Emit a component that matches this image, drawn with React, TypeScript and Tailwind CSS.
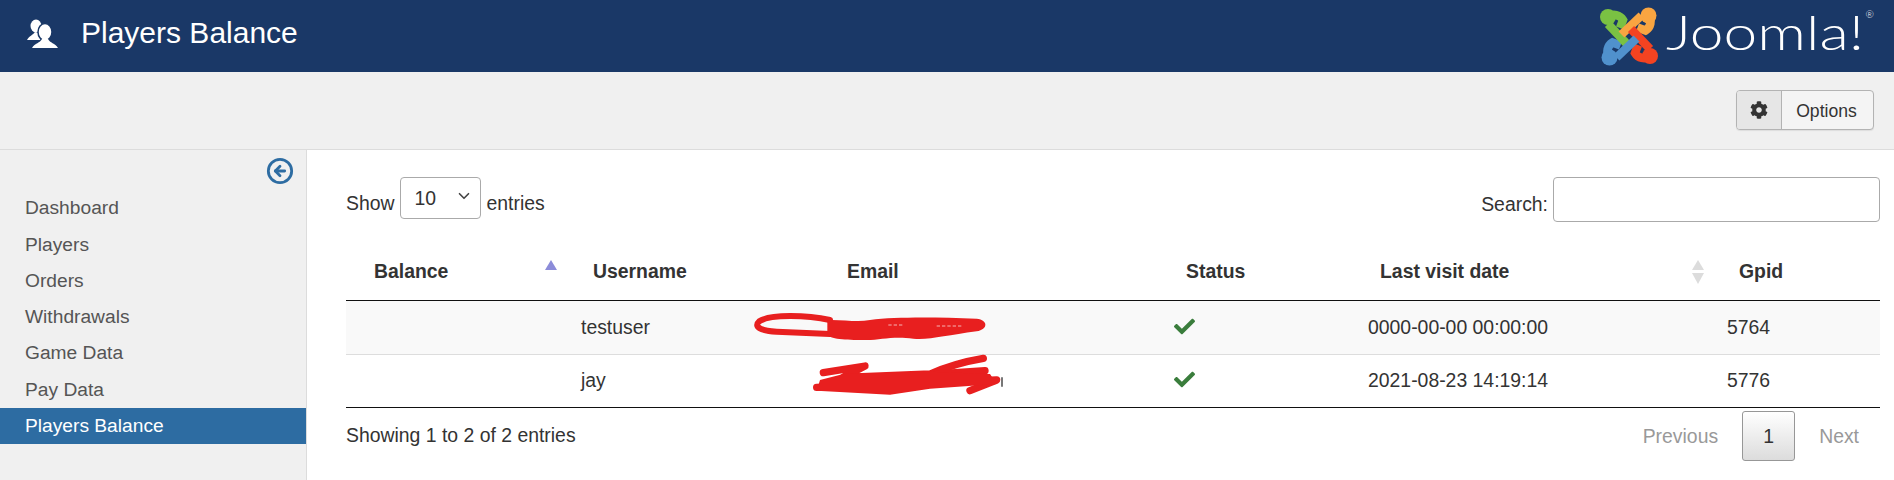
import { ChevronDown, CircleArrowLeft } from "lucide-react";
import { FaCheck, FaCog } from "react-icons/fa";

const navItems = ["Dashboard", "Players", "Orders", "Withdrawals", "Game Data", "Pay Data", "Players Balance"];

const rows = [
  { username: "testuser", visited: "0000-00-00 00:00:00", gpid: "5764", striped: true },
  { username: "jay", visited: "2021-08-23 14:19:14", gpid: "5776", striped: false },
];

function UsersIcon() {
  return (
    <svg viewBox="0 0 50 45" className="mt-[-4px] h-[45px] w-[50px]">
      <ellipse cx="16" cy="14" rx="5.5" ry="6.5" fill="#fff" />
      <path d="M7 28C9 24 13 23 15 20L22 22 20 28Z" fill="#fff" />
      <ellipse cx="25" cy="20" rx="7" ry="8.5" fill="#fff" stroke="#1a3867" strokeWidth="1.5" />
      <path d="M12 36C15 31 20 31 22 27H28C30 31 35 31 38 36Z" fill="#fff" />
    </svg>
  );
}

function JoomlaMark() {
  const colors = [
    { color: "#7ac143", angle: 0 },
    { color: "#f9a541", angle: 90 },
    { color: "#f44321", angle: 180 },
    { color: "#5091cd", angle: 270 },
  ];
  return (
    <svg viewBox="0 0 68 64" className="h-[64px] w-[68px]">
      {/* short arms go under the long bands of the next piece */}
      {colors.map(({ color, angle }) => (
        <g key={color} transform={`rotate(${angle} 34 32.5)`} fill="none" stroke={color} strokeWidth="8.5">
          <path d="M13 13C18 9 25 11 28 16L25 24" />
        </g>
      ))}
      {colors.map(({ color, angle }) => (
        <g key={color} transform={`rotate(${angle} 34 32.5)`} fill="none" stroke={color} strokeWidth="8.5">
          <circle cx="13" cy="13" r="8" fill={color} stroke="none" />
          <path d="M13 20L32 40" />
        </g>
      ))}
    </svg>
  );
}

function SortAsc() {
  return (
    <svg viewBox="0 0 12 10" className="absolute left-[199px] top-[17px] h-[10px] w-[12px]">
      <path d="M6 0L12 10H0Z" fill="#8c8cd9" />
    </svg>
  );
}

function SortBoth() {
  return (
    <svg viewBox="0 0 12 24" className="absolute left-[336px] top-[17px] h-[24px] w-[12px]">
      <path d="M6 0L12 10H0Z" fill="#dcdcdc" />
      <path d="M0 13H12L6 24Z" fill="#dcdcdc" />
    </svg>
  );
}

// red marker scribbles over the email column
function Scribbles() {
  return (
    <svg viewBox="0 0 870 330" className="pointer-events-none absolute left-[384px] top-[57px] h-[110px] w-[290px]">
      <g fill="none" stroke="#e81f1f" strokeLinecap="round" strokeLinejoin="round">
        <path d="M300 60C230 45 120 42 88 64C70 80 90 92 140 95L300 102" strokeWidth="18" />
        <path d="M280 218L405 198L340 232L600 222C650 200 700 185 760 175" strokeWidth="22" />
        <path d="M620 222L765 212M260 262L800 240L720 272" strokeWidth="22" />
      </g>
      <path d="M292 60C340 58 380 68 420 60C500 50 620 52 740 56C775 60 775 88 740 94C650 106 600 120 550 116C480 108 450 122 400 120C350 120 296 118 292 102Z" fill="#e81f1f" />
      <path d="M270 240L340 222L600 215L780 222L800 252L600 266L480 284L260 272Z" fill="#e81f1f" />
      <path d="M475 75H520M620 78H700" stroke="#fff" strokeWidth="2" strokeDasharray="10 6" />
      <path d="M816 232V260" stroke="#333" strokeWidth="4" />
    </svg>
  );
}

export default function App() {
  return (
    <div className="h-[480px] w-[1894px] overflow-hidden bg-white font-['Liberation_Sans',Arial,sans-serif] text-[19.4px] text-[#333]">
      <header className="flex h-[72px] items-center justify-between bg-[#1a3867] pl-[20px] pr-[14px]">
        <div className="flex items-center gap-[11px]">
          <UsersIcon />
          <h1 className="pb-[6px] text-[30px] font-normal leading-none text-white">Players Balance</h1>
        </div>
        <div className="flex items-center">
          <JoomlaMark />
          <span className="relative ml-[3px] mr-[14px] block w-[200px] pb-[8px] font-['Lato',sans-serif] text-[48px] font-light leading-none text-white">
            <span className="block origin-left scale-x-[1.26] whitespace-nowrap">Joomla!</span>
            <sup className="absolute right-[-8px] top-[6px] text-[10px]">®</sup>
          </span>
        </div>
      </header>

      <div className="flex h-[78px] items-start justify-end border-b border-[#dcdcdc] bg-[#f0f0f0] pr-[20px] pt-[18px]">
        <button className="flex h-[40px] w-[138px] items-stretch rounded-[4px] border border-[#b3b3b3] bg-[#f4f4f4] text-[17.6px] shadow-[0_1px_1px_rgba(0,0,0,0.08)]">
          <span className="flex w-[45px] items-center justify-center rounded-l-[3px] border-r border-[#b3b3b3] bg-[#e6e6e6]">
            <FaCog size={18} className="text-[#333]" />
          </span>
          <span className="flex flex-1 items-center justify-center pr-[2px] pt-[2px]">Options</span>
        </button>
      </div>

      <div className="flex h-[331px]">
        <aside className="w-[307px] border-r border-[#dcdcdc] bg-[#f0f0f0] text-[19.2px]">
          <div className="flex h-[40px] items-start justify-end pr-[12px] pt-[7px]">
            <CircleArrowLeft size={28} strokeWidth={2.4} className="text-[#2d6ca2]" />
          </div>
          <nav>
            {navItems.map((item) => (
              <a
                key={item}
                href="#"
                className={
                  item === "Players Balance"
                    ? "flex h-[36.3px] items-center bg-[#2d6ca2] pl-[25px] pt-[1px] text-white"
                    : "flex h-[36.3px] items-center pl-[25px] pt-[1px] text-[#555]"
                }
              >
                {item}
              </a>
            ))}
          </nav>
        </aside>

        <main className="flex-1 pl-[39px] pr-[14px] pt-[27px]">
          <div className="flex items-start justify-between">
            <label className="flex items-center">
              <span className="pt-[12px]">Show</span>
              <span className="relative ml-[5px] mr-[6px] block">
                <select className="h-[42px] w-[81px] appearance-none rounded-[4px] border border-[#aaa] bg-white pl-[14px] pt-[1px] outline-none">
                  <option>10</option>
                </select>
                <ChevronDown size={18} strokeWidth={2.2} className="pointer-events-none absolute right-[8px] top-[10px] text-[#444]" />
              </span>
              <span className="pt-[12px]">entries</span>
            </label>
            <label className="flex items-center">
              <span className="pr-[5px] pt-[10px]">Search:</span>
              <input className="h-[45px] w-[327px] rounded-[4px] border border-[#aaa] bg-white outline-none" />
            </label>
          </div>

          <div className="relative mt-[21px]">
            <table className="w-full table-fixed border-collapse">
              <colgroup>
                <col className="w-[223px]" />
                <col className="w-[254px]" />
                <col className="w-[339px]" />
                <col className="w-[194px]" />
                <col className="w-[359px]" />
                <col />
              </colgroup>
              <thead>
                <tr className="h-[57px] border-b-[1.5px] border-[#111] text-left font-bold">
                  <th className="relative pl-7">
                    Balance
                    <SortAsc />
                  </th>
                  <th className="pl-6">Username</th>
                  <th className="pl-6">Email</th>
                  <th className="pl-6">Status</th>
                  <th className="relative pl-6">
                    Last visit date
                    <SortBoth />
                  </th>
                  <th className="pl-6">Gpid</th>
                </tr>
              </thead>
              <tbody>
                {rows.map((row) => (
                  <tr
                    key={row.gpid}
                    className={row.striped ? "h-[54px] border-b border-[#ddd] bg-[#f9f9f9]" : "h-[53px] border-b-[1.5px] border-[#111]"}
                  >
                    <td />
                    <td className={row.striped ? "pl-3 pt-[2px]" : "pl-3"}>{row.username}</td>
                    <td />
                    <td className="pl-3 pb-[2px]">
                      <FaCheck size={21} className="text-[#3a7d3c]" />
                    </td>
                    <td className={row.striped ? "pl-3 pt-[2px]" : "pl-3"}>{row.visited}</td>
                    <td className={row.striped ? "pl-3 pt-[2px]" : "pl-3"}>{row.gpid}</td>
                  </tr>
                ))}
              </tbody>
            </table>
            <Scribbles />
          </div>

          <div className="mt-[3px] flex items-start justify-between">
            <div className="pt-[10px]">Showing 1 to 2 of 2 entries</div>
            <div className="flex h-[50px] items-center pr-[21px]">
              <a href="#" className="pt-[2px] text-[#999]">Previous</a>
              <a
                href="#"
                className="mx-[24px] flex h-[50px] w-[53px] items-center justify-center rounded-[3px] border border-[#979797] bg-gradient-to-b from-white to-[#dcdcdc] pt-[2px]"
              >
                1
              </a>
              <a href="#" className="pt-[2px] text-[#999]">Next</a>
            </div>
          </div>
        </main>
      </div>
    </div>
  );
}
